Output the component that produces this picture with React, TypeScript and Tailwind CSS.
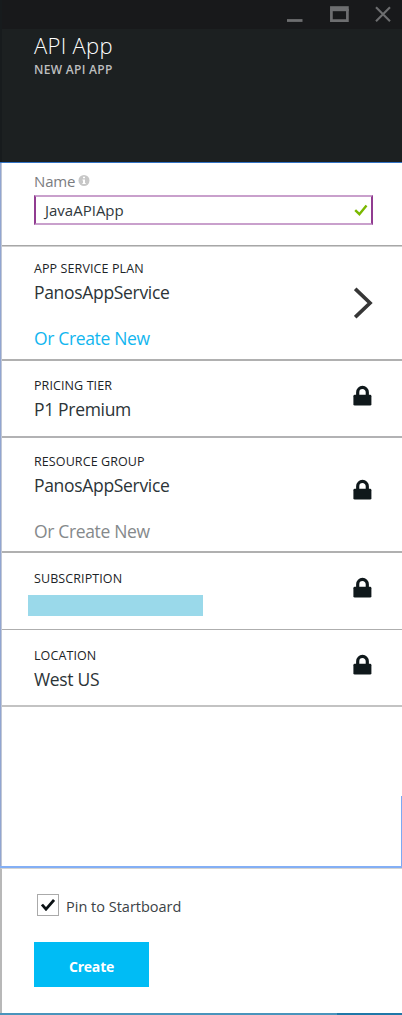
import type { ReactNode } from "react";

function LockIcon() {
  return (
    <svg width="20" height="22" viewBox="0 0 20 22" fill="none">
      <path d="M4.7 11V7.2a4.8 4.8 0 0 1 9.6 0V11" stroke="#0f181b" strokeWidth="3.2" />
      <rect x="0.4" y="9.8" width="18" height="10.8" rx="1.4" fill="#0f181b" />
    </svg>
  );
}

function Label({ children }: { children: ReactNode }) {
  return <div className="h-5 pt-px text-[12.5px] leading-5 text-[#1c2427] tracking-[0.1px] whitespace-nowrap">{children}</div>;
}

function Value({ children }: { children: ReactNode }) {
  return <div className="mt-0.5 h-6 text-[17.5px] leading-6 text-[#2c3437] tracking-[-0.32px] whitespace-nowrap">{children}</div>;
}

export default function App() {
  return (
    <div className="flex h-[1015px] w-[402px] flex-col bg-white font-['Open_Sans','Noto_Sans',sans-serif]">
      <header className="h-[162px] shrink-0 border-l-2 border-[#171b1d] bg-[#1c2021]">
        <div className="flex h-[29px] justify-end bg-[#18191b]">
          <svg width="120" height="29" viewBox="0 0 120 29" fill="none" stroke="#6d6e70">
            <path d="M5 20.5h15.5" strokeWidth="2.8" />
            <path d="M49.4 9v11.6h16V9" strokeWidth="2.7" />
            <path d="M48.05 8.7h18.7" strokeWidth="5" />
            <path d="m94 7.2 14 14M108 7.2l-14 14" strokeWidth="2.1" />
          </svg>
        </div>
        <div className="pl-8">
          <h1 className="h-[31px] text-[22px] leading-[33px] font-light tracking-[0.3px] text-white">API App</h1>
          <div className="h-5 text-[12px] leading-5 font-semibold tracking-[0.3px] text-[#bcbebf]">NEW API APP</div>
        </div>
      </header>

      <main className="flex h-[706px] shrink-0 flex-col border-t border-b-2 border-t-[#3273c5] border-b-[#83aff5]">
        <div className="flex grow">
          <div className="w-[2px] border-l border-[#91a5d1] bg-[#c1c7d4]" />
          <div className="flex grow flex-col">
            <section className="h-[84px] border-b border-[#d0d0d0] pt-2 pl-8">
              <div className="flex h-5 items-center gap-[3px]">
                <span className="text-[15px] leading-5 tracking-[-0.15px] text-[#7b7c7f]">Name</span>
                <svg width="12" height="12" viewBox="0 0 12 12">
                  <circle cx="6" cy="5.5" r="5.5" fill="#c7c7c7" />
                  <path d="M5 1.7h2v1.5H5zM4.5 4.5H7v3.5h.7v1H4.4v-1H5V5.5h-.5z" fill="#fff" />
                </svg>
              </div>
              <div className="mt-1 flex h-[30px] w-[339px] items-center justify-between border-2 border-x-[#913c91] border-y-[#c9a0cc] pr-[3px] pl-[9px]">
                <span className="text-[15px] leading-6 text-[#30383c]">JavaAPIApp</span>
                <svg width="14" height="12" viewBox="0 0 14 12" fill="none">
                  <path d="m1.2 6.2 4.2 4L12.5 1.4" stroke="#7ab800" strokeWidth="2.4" />
                </svg>
              </div>
              <div className="mt-5 -ml-8 h-px bg-[#a7a7a7]" />
            </section>

            <section className="flex h-[114px] justify-between border-b-2 border-[#b0b0b0] pt-[11px] pr-7 pl-8">
              <div>
                <Label>APP SERVICE PLAN</Label>
                <Value>PanosAppService</Value>
                <div className="mt-[22px] text-[17.5px] leading-6 tracking-[-0.35px] text-[#12b6ef]">Or Create New</div>
              </div>
              <svg className="mt-[29px]" width="20" height="32" viewBox="0 0 20 32" fill="none">
                <path d="M1.2 1.8 16 16 1.2 30.2" stroke="#363636" strokeWidth="3.7" />
              </svg>
            </section>

            <section className="flex h-[77px] justify-between border-b-2 border-[#b2b2b4] pt-[14px] pr-[29px] pl-8">
              <div>
                <Label>PRICING TIER</Label>
                <Value>P1 Premium</Value>
              </div>
              <div className="pt-[10px]"><LockIcon /></div>
            </section>

            <section className="flex h-[115px] justify-between border-b-2 border-[#b0b0b0] pt-[13px] pr-[29px] pl-8">
              <div>
                <Label>RESOURCE GROUP</Label>
                <Value>PanosAppService</Value>
                <div className="mt-[22px] text-[17.5px] leading-6 tracking-[-0.35px] text-[#85898b]">Or Create New</div>
              </div>
              <div className="pt-[28px]"><LockIcon /></div>
            </section>

            <section className="flex h-[77px] justify-between border-b border-[#aeaeae] pt-[15px] pr-[29px] pl-8">
              <div>
                <Label>SUBSCRIPTION</Label>
                <div className="mt-[7px] -ml-1.5 h-[21px] w-[175px] bg-[#9ad9ea]" />
              </div>
              <div className="pt-[9px]"><LockIcon /></div>
            </section>

            <section className="flex h-[77px] justify-between border-b-2 border-[#c3c3c3] pt-[15px] pr-[29px] pl-8">
              <div>
                <Label>LOCATION</Label>
                <Value>West US</Value>
              </div>
              <div className="pt-[9px]"><LockIcon /></div>
            </section>
            <div className="flex grow items-end justify-end">
              <div className="h-[70px] w-px bg-[#7ba9f3]" />
            </div>
          </div>
        </div>
      </main>

      <footer className="h-[145px] shrink-0 border-t border-l-2 border-t-[#d4d4d4] border-l-[#b8b8b8] pt-[25px] pl-8">
        <label className="flex h-[22px] items-center gap-[7px] pl-[3px]">
          <span className="flex size-[22px] items-center justify-center border border-[#aaa]">
            <svg width="14" height="12" viewBox="0 0 14 12" fill="none">
              <path d="m1 5.5 4 4.7L13 1" stroke="#0b1114" strokeWidth="2.7" />
            </svg>
          </span>
          <span className="pt-1 text-[14.5px] leading-5 text-[#3b4246]">Pin to Startboard</span>
        </label>
        <button className="mt-[26px] block h-[45px] w-[115px] bg-[#00bcf5] pt-1 text-[14px] leading-5 font-bold tracking-[-0.2px] text-white">Create</button>
      </footer>
      <div className="flex h-[2px] shrink-0 bg-[#4a94bc]">
        <div className="ml-auto w-[65px] bg-[#1f77a8]" />
      </div>
    </div>
  );
}
